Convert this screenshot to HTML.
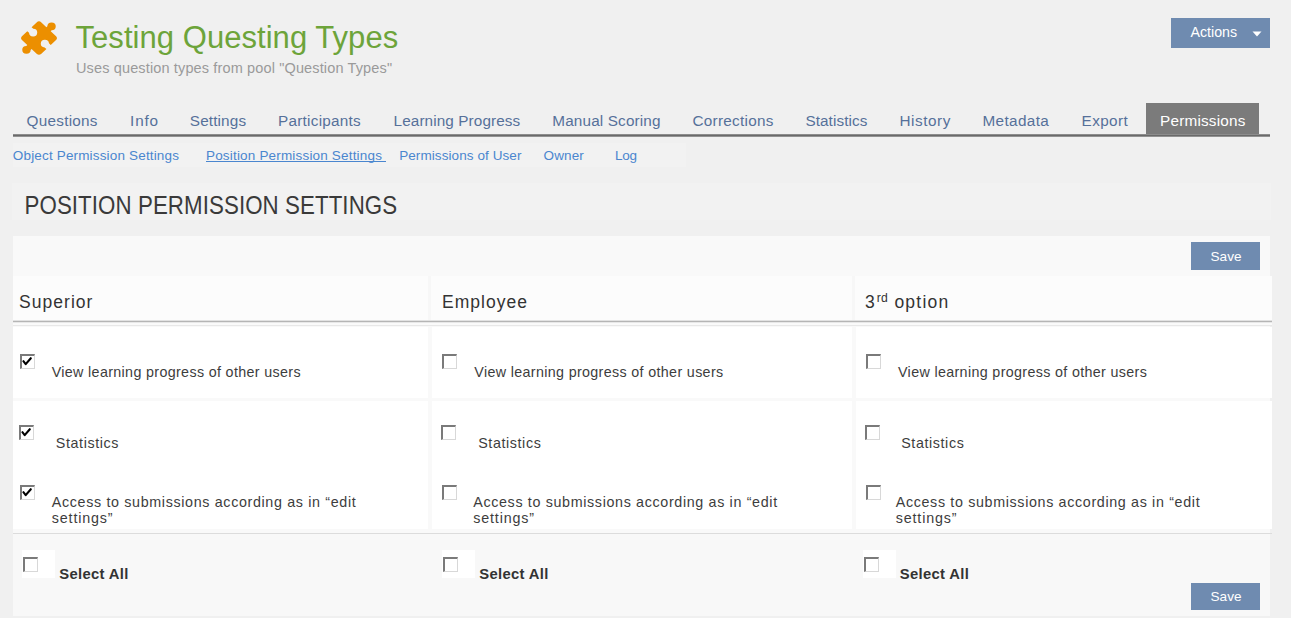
<!DOCTYPE html>
<html><head><meta charset="utf-8"><style>
html,body{margin:0;padding:0;}
body{width:1291px;height:618px;overflow:hidden;background:#f0f0f0;position:relative;font-family:"Liberation Sans",sans-serif;}
.t{position:absolute;white-space:nowrap;}
.r{position:absolute;}
.cb{position:absolute;width:15px;height:15px;box-sizing:border-box;background:#fff;border-top:2px solid #7a7a7a;border-left:2px solid #7a7a7a;border-right:1px solid #d8d8d8;border-bottom:1px solid #d8d8d8;}
</style></head><body>
<svg style="position:absolute;left:0;top:0" width="80" height="80" viewBox="0 0 80 80">
<g transform="translate(39.0 38.1) scale(1.05 0.98) rotate(45)"><path fill="#ec8f00" d="M-9.70,-12.90 L-2.90,-12.90 L-2.90,-14.15 A4.0,4.0 0 1 1 2.90,-14.15 L2.90,-12.90 L9.70,-12.90 Q12.90,-12.90 12.90,-9.70 L12.90,-2.90 L10.51,-2.90 A3.9,3.9 0 1 0 10.51,2.90 L12.90,2.90 L12.90,9.70 Q12.90,12.90 9.70,12.90 L2.90,12.90 L2.90,14.15 A4.0,4.0 0 1 1 -2.90,14.15 L-2.90,12.90 L-9.70,12.90 Q-12.90,12.90 -12.90,9.70 L-12.90,2.90 L-10.51,2.90 A3.9,3.9 0 1 0 -10.51,-2.90 L-12.90,-2.90 L-12.90,-9.70 Q-12.90,-12.90 -9.70,-12.90 Z"/></g></svg>
<div class="t " style="left:75.50px;top:18.26px;font-size:31px;line-height:39px;color:#6da43a;letter-spacing:0.048px;font-weight:normal;">Testing Questing Types</div>
<div class="t " style="left:76.00px;top:58.58px;font-size:14.5px;line-height:18px;color:#9a9a9a;letter-spacing:0.138px;font-weight:normal;">Uses question types from pool "Question Types"</div>
<div class="r" style="left:1171px;top:18px;width:99px;height:30px;background:#6f8bb0;"></div>
<div class="t " style="left:1190.50px;top:23.48px;font-size:14.2px;line-height:18px;color:#ffffff;letter-spacing:0px;font-weight:normal;">Actions</div>
<svg style="position:absolute;left:1252px;top:31px" width="10" height="6"><path d="M0.5,0.5 L9.5,0.5 L5,5.5 Z" fill="#fff"/></svg>
<div class="t tab" style="left:26.60px;top:111.00px;font-size:15.3px;line-height:19px;color:#56709a;letter-spacing:0.25px;font-weight:normal;">Questions</div>
<div class="t tab" style="left:130.10px;top:111.00px;font-size:15.3px;line-height:19px;color:#56709a;letter-spacing:0.8px;font-weight:normal;">Info</div>
<div class="t tab" style="left:189.80px;top:111.00px;font-size:15.3px;line-height:19px;color:#56709a;letter-spacing:0.143px;font-weight:normal;">Settings</div>
<div class="t tab" style="left:278.00px;top:111.00px;font-size:15.3px;line-height:19px;color:#56709a;letter-spacing:0.255px;font-weight:normal;">Participants</div>
<div class="t tab" style="left:393.60px;top:111.00px;font-size:15.3px;line-height:19px;color:#56709a;letter-spacing:0.1px;font-weight:normal;">Learning Progress</div>
<div class="t tab" style="left:552.30px;top:111.00px;font-size:15.3px;line-height:19px;color:#56709a;letter-spacing:0.146px;font-weight:normal;">Manual Scoring</div>
<div class="t tab" style="left:692.40px;top:111.00px;font-size:15.3px;line-height:19px;color:#56709a;letter-spacing:0.28px;font-weight:normal;">Corrections</div>
<div class="t tab" style="left:805.40px;top:111.00px;font-size:15.3px;line-height:19px;color:#56709a;letter-spacing:0.089px;font-weight:normal;">Statistics</div>
<div class="t tab" style="left:899.50px;top:111.00px;font-size:15.3px;line-height:19px;color:#56709a;letter-spacing:0.55px;font-weight:normal;">History</div>
<div class="t tab" style="left:982.40px;top:111.00px;font-size:15.3px;line-height:19px;color:#56709a;letter-spacing:0.371px;font-weight:normal;">Metadata</div>
<div class="t tab" style="left:1081.60px;top:111.00px;font-size:15.3px;line-height:19px;color:#56709a;letter-spacing:0.38px;font-weight:normal;">Export</div>
<div class="r" style="left:1146px;top:103px;width:113px;height:32px;background:#7b7b7b;"></div>
<div class="t tab" style="left:1160.00px;top:111.00px;font-size:15.3px;line-height:19px;color:#ffffff;letter-spacing:0.21px;font-weight:normal;">Permissions</div>
<div class="r" style="left:13px;top:134px;width:1257px;height:1px;background:#8c8c8c;"></div>
<div class="r" style="left:13px;top:135px;width:1257px;height:1px;background:#6a6a6a;"></div>
<div class="r" style="left:13px;top:136px;width:1257px;height:1px;background:#929292;"></div>
<div class="r" style="left:13px;top:143px;width:673px;height:24px;background:#f2f2f2;"></div>
<div class="t sub" style="left:12.80px;top:146.82px;font-size:13.5px;line-height:17px;color:#4a86cf;letter-spacing:0.164px;font-weight:normal;">Object Permission Settings</div>
<div class="t sub" style="left:206.00px;top:146.82px;font-size:13.5px;line-height:17px;color:#4a86cf;letter-spacing:0.178px;font-weight:normal;">Position Permission Settings</div>
<div class="t sub" style="left:399.20px;top:146.82px;font-size:13.5px;line-height:17px;color:#4a86cf;letter-spacing:0.078px;font-weight:normal;">Permissions of User</div>
<div class="t sub" style="left:543.60px;top:146.82px;font-size:13.5px;line-height:17px;color:#4a86cf;letter-spacing:0.125px;font-weight:normal;">Owner</div>
<div class="t sub" style="left:614.90px;top:146.82px;font-size:13.5px;line-height:17px;color:#4a86cf;letter-spacing:-0.2px;font-weight:normal;">Log</div>
<div class="r" style="left:206px;top:161px;width:180px;height:1px;background:#4a86cf;"></div>
<div class="r" style="left:12px;top:183px;width:1259px;height:37px;background:#f2f2f2;"></div>
<div class="t hd" style="left:24.50px;top:193.27px;font-size:22.3px;line-height:28px;color:#3a3a3a;letter-spacing:0.081px;font-weight:normal;transform:scaleY(1.17);transform-origin:0 21.73px;">POSITION PERMISSION SETTINGS</div>
<div class="r" style="left:13px;top:236px;width:1257px;height:380px;background:#f9f9f9;"></div>
<div class="r" style="left:1191px;top:242px;width:69px;height:28px;background:#6f8bb0;"></div>
<div class="t " style="left:1210.50px;top:247.89px;font-size:13.6px;line-height:17px;color:#ffffff;letter-spacing:0px;font-weight:normal;">Save</div>
<div class="r" style="left:13px;top:276px;width:1259px;height:45px;background:#fcfcfc;"></div>
<div class="r" style="left:428px;top:276px;width:3px;height:45px;background:#f7f7f7;"></div>
<div class="r" style="left:852px;top:276px;width:3px;height:45px;background:#f7f7f7;"></div>
<div class="t th" style="left:19.00px;top:290.54px;font-size:17.5px;line-height:22px;color:#333333;letter-spacing:1.043px;font-weight:normal;">Superior</div>
<div class="t th" style="left:442.00px;top:290.54px;font-size:17.5px;line-height:22px;color:#333333;letter-spacing:1.014px;font-weight:normal;">Employee</div>
<div class="t th" style="left:865.00px;top:290.54px;font-size:17.5px;line-height:22px;color:#333333;letter-spacing:0px;font-weight:normal;">3</div>
<div class="t th" style="left:876.80px;top:290.57px;font-size:12.2px;line-height:15px;color:#333333;letter-spacing:0.2px;font-weight:normal;">rd</div>
<div class="t th" style="left:894.40px;top:290.54px;font-size:17.5px;line-height:22px;color:#333333;letter-spacing:1.24px;font-weight:normal;">option</div>
<div class="r" style="left:13px;top:320px;width:1259px;height:1px;background:#e2e2e2;"></div>
<div class="r" style="left:13px;top:321px;width:1259px;height:1px;background:#b5b5b5;"></div>
<div class="r" style="left:13px;top:322px;width:1259px;height:1px;background:#e8e8e8;"></div>
<div class="r" style="left:13px;top:323px;width:1259px;height:2px;background:#fafafa;"></div>
<div class="r" style="left:13px;top:325px;width:1259px;height:1px;background:#e8e8e8;"></div>
<div class="r" style="left:13px;top:327px;width:415px;height:71px;background:#ffffff;"></div>
<div class="r" style="left:13px;top:401px;width:415px;height:128px;background:#ffffff;"></div>
<div class="r" style="left:432px;top:327px;width:420px;height:71px;background:#ffffff;"></div>
<div class="r" style="left:432px;top:401px;width:420px;height:128px;background:#ffffff;"></div>
<div class="r" style="left:856px;top:327px;width:416px;height:71px;background:#ffffff;"></div>
<div class="r" style="left:856px;top:401px;width:416px;height:128px;background:#ffffff;"></div>
<div class="r" style="left:13px;top:533px;width:1259px;height:1px;background:#dcdcdc;"></div>
<div class="r" style="left:13px;top:534px;width:1257px;height:82px;background:#f8f8f8;"></div>
<div class="cb" style="left:20px;top:354px"><svg style="position:absolute;left:-2px;top:-2px" width="15" height="15" viewBox="0 0 15 15"><path d="M3.4,7.2 L5.7,10.1 L10.8,4.2" stroke="#000" stroke-width="2.1" fill="none" stroke-linecap="round" stroke-linejoin="round"/></svg></div>
<div class="cb" style="left:19px;top:425px"><svg style="position:absolute;left:-2px;top:-2px" width="15" height="15" viewBox="0 0 15 15"><path d="M3.4,7.2 L5.7,10.1 L10.8,4.2" stroke="#000" stroke-width="2.1" fill="none" stroke-linecap="round" stroke-linejoin="round"/></svg></div>
<div class="cb" style="left:20px;top:485px"><svg style="position:absolute;left:-2px;top:-2px" width="15" height="15" viewBox="0 0 15 15"><path d="M3.4,7.2 L5.7,10.1 L10.8,4.2" stroke="#000" stroke-width="2.1" fill="none" stroke-linecap="round" stroke-linejoin="round"/></svg></div>
<div class="t td" style="left:51.70px;top:362.55px;font-size:14.3px;line-height:18px;color:#3d3d3d;letter-spacing:0.342px;font-weight:normal;">View learning progress of other users</div>
<div class="t td" style="left:55.80px;top:434.35px;font-size:14.3px;line-height:18px;color:#3d3d3d;letter-spacing:0.6px;font-weight:normal;">Statistics</div>
<div class="t td" style="left:51.80px;top:492.65px;font-size:14.3px;line-height:18px;color:#3d3d3d;letter-spacing:0.652px;font-weight:normal;">Access to submissions according as in “edit</div>
<div class="t td" style="left:51.80px;top:509.25px;font-size:14.3px;line-height:18px;color:#3d3d3d;letter-spacing:0.85px;font-weight:normal;">settings”</div>
<div class="r" style="left:22px;top:550px;width:33px;height:28px;background:#ffffff;"></div>
<div class="cb" style="left:23px;top:557px"></div>
<div class="t sa" style="left:59.20px;top:565.27px;font-size:14.8px;line-height:18px;color:#333333;letter-spacing:0.344px;font-weight:bold;">Select All</div>
<div class="cb" style="left:442px;top:354px"></div>
<div class="cb" style="left:441px;top:425px"></div>
<div class="cb" style="left:442px;top:485px"></div>
<div class="t td" style="left:474.30px;top:362.55px;font-size:14.3px;line-height:18px;color:#3d3d3d;letter-spacing:0.342px;font-weight:normal;">View learning progress of other users</div>
<div class="t td" style="left:478.20px;top:434.35px;font-size:14.3px;line-height:18px;color:#3d3d3d;letter-spacing:0.6px;font-weight:normal;">Statistics</div>
<div class="t td" style="left:473.20px;top:492.65px;font-size:14.3px;line-height:18px;color:#3d3d3d;letter-spacing:0.652px;font-weight:normal;">Access to submissions according as in “edit</div>
<div class="t td" style="left:473.20px;top:509.25px;font-size:14.3px;line-height:18px;color:#3d3d3d;letter-spacing:0.85px;font-weight:normal;">settings”</div>
<div class="r" style="left:442px;top:550px;width:33px;height:28px;background:#ffffff;"></div>
<div class="cb" style="left:443px;top:557px"></div>
<div class="t sa" style="left:479.20px;top:565.27px;font-size:14.8px;line-height:18px;color:#333333;letter-spacing:0.344px;font-weight:bold;">Select All</div>
<div class="cb" style="left:866px;top:354px"></div>
<div class="cb" style="left:865px;top:425px"></div>
<div class="cb" style="left:866px;top:485px"></div>
<div class="t td" style="left:898.00px;top:362.55px;font-size:14.3px;line-height:18px;color:#3d3d3d;letter-spacing:0.342px;font-weight:normal;">View learning progress of other users</div>
<div class="t td" style="left:901.20px;top:434.35px;font-size:14.3px;line-height:18px;color:#3d3d3d;letter-spacing:0.6px;font-weight:normal;">Statistics</div>
<div class="t td" style="left:895.70px;top:492.65px;font-size:14.3px;line-height:18px;color:#3d3d3d;letter-spacing:0.652px;font-weight:normal;">Access to submissions according as in “edit</div>
<div class="t td" style="left:895.70px;top:509.25px;font-size:14.3px;line-height:18px;color:#3d3d3d;letter-spacing:0.85px;font-weight:normal;">settings”</div>
<div class="r" style="left:863px;top:550px;width:33px;height:28px;background:#ffffff;"></div>
<div class="cb" style="left:864px;top:557px"></div>
<div class="t sa" style="left:899.70px;top:565.27px;font-size:14.8px;line-height:18px;color:#333333;letter-spacing:0.344px;font-weight:bold;">Select All</div>
<div class="r" style="left:1191px;top:583px;width:69px;height:27px;background:#6f8bb0;"></div>
<div class="t " style="left:1210.50px;top:587.59px;font-size:13.6px;line-height:17px;color:#ffffff;letter-spacing:0px;font-weight:normal;">Save</div>
</body></html>
